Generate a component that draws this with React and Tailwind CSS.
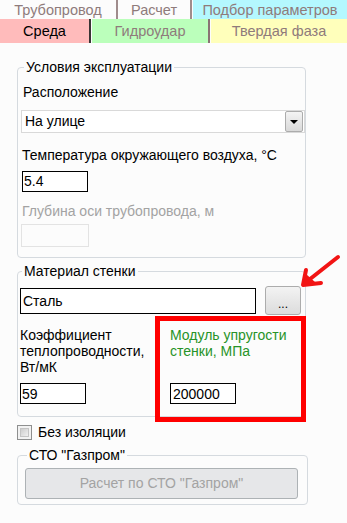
import React from 'react';

const font = "font-['Liberation_Sans',Arial,sans-serif]";

function TopTabs() {
  return (
    <div className="text-[14.5px] leading-4">
      {/* upper row */}
      <div className="flex h-[19px]">
        <div className="w-[118px] border-r-2 border-[#a08c8c] flex items-center justify-center text-[#8f7b7b]">
          Трубопровод
        </div>
        <div className="w-[74px] border-r-2 border-[#a08c8c] flex items-center justify-center text-[#8f7b7b]">
          Расчет
        </div>
        <div className="flex-1 ml-[1px] bg-[#b4f8ff] flex items-center justify-center text-[#8f7b7b]">
          Подбор параметров
        </div>
      </div>
      {/* lower row */}
      <div className="flex h-[24px]">
        <div className="w-[91px] bg-[#ffbbbb] border-r-2 border-[#3a3434] flex items-center justify-center text-black">
          Среда
        </div>
        <div className="w-[118px] ml-[1px] bg-[#bbffbb] border-r-2 border-[#8a7474] flex items-center justify-center text-[#8f7b7b]">
          Гидроудар
        </div>
        <div className="flex-1 ml-[1px] bg-[#ffffbb] flex items-center justify-center text-[#8f7b7b]">
          Твердая фаза
        </div>
      </div>
    </div>
  );
}

function Group({ title, className = '', children }) {
  return (
    <fieldset className={`border border-[#d5dadf] rounded-[4px] ${className}`}>
      <legend className="ml-[2px] px-[2px] leading-4 text-black">{title}</legend>
      {children}
    </fieldset>
  );
}

function TextBox({ value, className = '' }) {
  return (
    <input
      readOnly
      defaultValue={value}
      className={`block bg-white border border-black outline-none text-black text-[14px] ${className}`}
    />
  );
}

export default function App() {
  return (
    <div className={`relative w-[347px] h-[523px] bg-[#fcfcfc] overflow-hidden text-[14px] ${font}`}>
      <TopTabs />

      <div className="px-[17px] flex flex-col">
        <Group title="Условия эксплуатации" className="mt-4 w-[289px] pl-[4px] pb-[10px]">
          <div className="mt-[9px] leading-4 text-black pl-px">Расположение</div>

          <div className="mt-[10px] -ml-px w-[284px] h-[23px] bg-white border border-[#d9d9d9] flex items-center justify-between pl-[3px] pr-[1px]">
            <span className="text-black">На улице</span>
            <div className="w-[18px] h-[21px] rounded-[2px] border border-[#acacac] bg-gradient-to-b from-[#f4f4f4] to-[#d9d9d9] flex items-center justify-center">
              <div className="w-0 h-0 border-l-[4px] border-r-[4px] border-t-[4px] border-l-transparent border-r-transparent border-t-black" />
            </div>
          </div>

          <div className="mt-[14px] leading-4 text-black">Температура окружающего воздуха, °С</div>
          <TextBox value="5.4" className="mt-[8px] w-[66px] h-[21px] pl-px" />

          <div className="mt-[11px] leading-4 text-[#a3a3a3]">Глубина оси трубопровода, м</div>
          <div className="mt-[5px] -ml-px w-[68px] h-[23px] border border-[#e3e3e3] bg-[#fcfcfc]" />
        </Group>

        <Group title="Материал стенки" className="mt-[5px] w-[289px] pl-[2px] pr-[4px] pb-[12px]">
          <div className="mt-[7px] flex items-center justify-between">
            <TextBox value="Сталь" className="w-[236px] h-[26px] pl-[2px]" />
            <button className="w-[36px] h-[29px] rounded-[3px] border border-[#acacac] bg-gradient-to-b from-[#f3f3f3] to-[#dcdcdc] text-[12px] leading-none pt-[6px] text-black">
              ...
            </button>
          </div>

          <div className="mt-[12px] grid grid-cols-[150px_1fr] gap-y-[8px] leading-4">
            <div className="text-black">
              Коэффициент
              <br />
              теплопроводности,
              <br />
              Вт/мК
            </div>
            <div className="text-[#279327]">
              Модуль упругости
              <br />
              стенки, МПа
            </div>
            <TextBox value="59" className="w-[66px] h-[21px] pl-px" />
            <TextBox value="200000" className="w-[66px] h-[21px] pl-[2px]" />
          </div>
        </Group>

        <label className="mt-[7px] h-4 flex items-center gap-[6px] text-black leading-4">
          <span className="w-[15px] h-[15px] border border-[#8e8f8f] bg-[#f2f2f2] flex items-center justify-center">
            <span className="w-[9px] h-[9px] bg-gradient-to-br from-[#cdcdcd] to-[#f0f0f0] border border-[#c4c4c4]" />
          </span>
          Без изоляции
        </label>

        <Group title={'СТО "Газпром"'} className="mt-[7px] w-[291px] pl-[7px] pr-[9px] pb-[5px]">
          <button
            disabled
            className="mt-[5px] w-full h-[31px] rounded-[3px] border border-[#adb2b5] bg-[#e6e7e9] text-[#a3a3a3]"
          >
            Расчет по СТО "Газпром"
          </button>
        </Group>
      </div>

      {/* annotation: red frame around the modulus field */}
      <div className="absolute left-[155px] top-[316px] w-[151px] h-[106px] border-[5px] border-[#ff0000] pointer-events-none" />

      {/* annotation: red arrow pointing at the "..." button */}
      <svg className="absolute left-[295px] top-[250px] pointer-events-none" width="50" height="45" viewBox="0 0 50 45">
        <g stroke="#f21414" strokeWidth="4" strokeLinecap="round" strokeLinejoin="round" fill="none">
          <line x1="43" y1="7" x2="10" y2="33" />
          <polyline points="11,20 8,35 26,33" />
        </g>
        <polygon points="8,35 11,24 20,32" fill="#f21414" />
      </svg>
    </div>
  );
}
